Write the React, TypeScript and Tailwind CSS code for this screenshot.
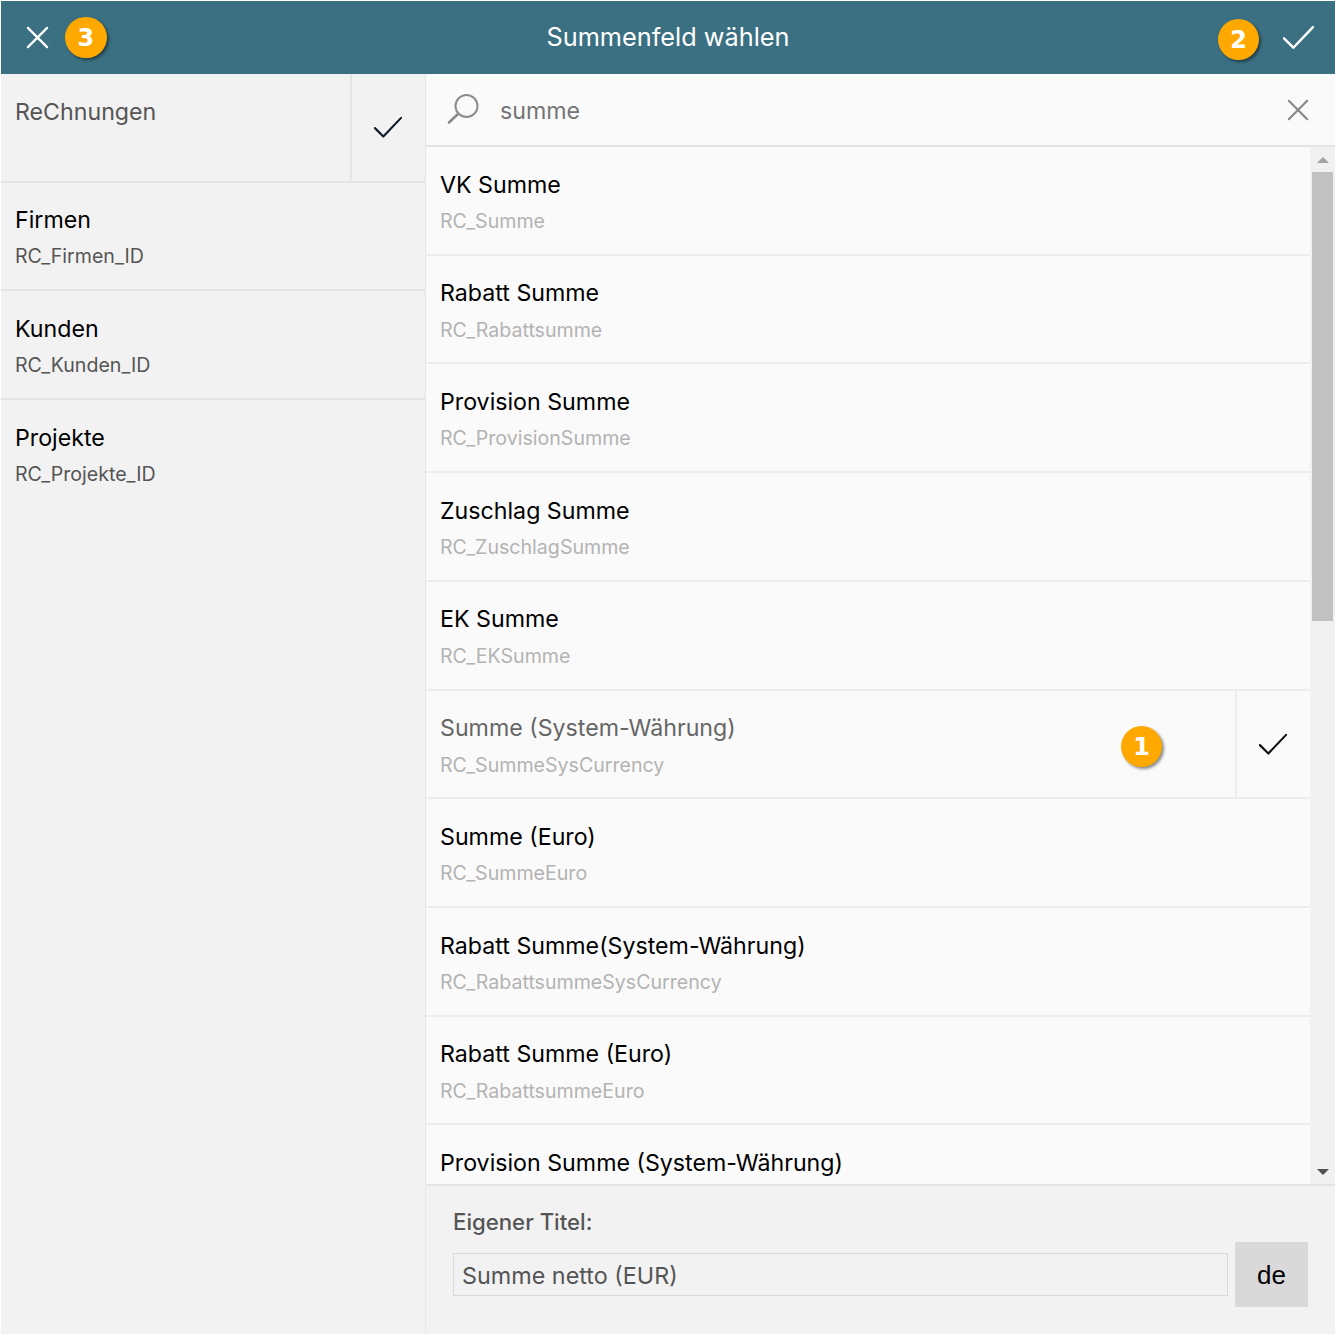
const items: [string, string][] = [
  ["VK Summe", "RC_Summe"],
  ["Rabatt Summe", "RC_Rabattsumme"],
  ["Provision Summe", "RC_ProvisionSumme"],
  ["Zuschlag Summe", "RC_ZuschlagSumme"],
  ["EK Summe", "RC_EKSumme"],
  ["Summe (System-Währung)", "RC_SummeSysCurrency"],
  ["Summe (Euro)", "RC_SummeEuro"],
  ["Rabatt Summe(System-Währung)", "RC_RabattsummeSysCurrency"],
  ["Rabatt Summe (Euro)", "RC_RabattsummeEuro"],
  ["Provision Summe (System-Währung)", ""],
];

const left: [string, string][] = [
  ["Firmen", "RC_Firmen_ID"],
  ["Kunden", "RC_Kunden_ID"],
  ["Projekte", "RC_Projekte_ID"],
];

function Badge({ n, className }: { n: string; className: string }) {
  return (
    <div
      className={
        "absolute w-[41.6px] h-[41.6px] pt-[1px] rounded-full bg-[#ffa900] text-white flex items-center justify-center text-[24px] font-bold font-['DejaVu_Sans',sans-serif] shadow-[2px_2px_3px_rgba(0,0,0,0.45)] " +
        className
      }
    >
      {n}
    </div>
  );
}

function Check({ size, color, stroke = 2 }: { size: number; color: string; stroke?: number }) {
  return (
    <svg width={size} height={size * 0.8} viewBox="0 0 30 24" fill="none" stroke={color} strokeWidth={stroke} strokeLinecap="round" strokeLinejoin="round">
      <path d="M1 13 L10 22 L29 2" />
    </svg>
  );
}

function Cross({ size, color, stroke = 2.4 }: { size: number; color: string; stroke?: number }) {
  return (
    <svg width={size} height={size} viewBox="0 0 24 24" fill="none" stroke={color} strokeWidth={stroke} strokeLinecap="round">
      <path d="M2 2 L22 22 M22 2 L2 22" />
    </svg>
  );
}

export default function App() {
  return (
    <div className="h-[1334px] w-[1335px] bg-white pl-px pt-px flex flex-col overflow-hidden font-['Inter',sans-serif] text-[23.2px]">
      <header className="relative h-[73px] shrink-0 bg-[#3b7082] flex items-center justify-between pl-[25px] pr-[21px]">
        <Cross size={23} color="#ffffff" />
        <h1 className="text-white text-[25.3px] leading-none ml-[4px] -mt-[1px]">Summenfeld wählen</h1>
        <Check size={31} color="#ffffff" stroke={2.4} />
        <Badge n="3" className="left-[64px] top-[15.7px]" />
        <Badge n="2" className="left-[1216.7px] top-[17.7px]" />
      </header>
      <div className="flex flex-1 min-h-0">
        <aside className="w-[425px] shrink-0 bg-[#f2f2f2] border-r border-[#e6e6e6]">
          <div className="flex h-[108.7px] border-b-2 border-[#e4e4e4]">
            <div className="flex-1 pl-[14px] pt-[24px] text-[#555555] leading-[29px]">ReChnungen</div>
            <div className="w-[75px] border-l-2 border-[#e6e6e6] flex items-center justify-center pr-[2px]">
              <Check size={28} color="#0d1b2a" stroke={2.3} />
            </div>
          </div>
          {left.map(([a, b], i) => (
            <div key={a} className={(i < 2 ? "border-b-2 border-[#e4e4e4] " : "") + "h-[108.7px] pl-[14px] pt-[23.6px]"}>
              <div className="text-black leading-[29px]">{a}</div>
              <div className="text-[#555555] text-[19.6px] leading-[24px] mt-[9px]">{b}</div>
            </div>
          ))}
        </aside>
        <main className="flex-1 min-w-0 flex flex-col bg-[#fafafa]">
          <div className="h-[73px] shrink-0 border-b-2 border-[#e4e4e4] flex items-center pl-[21px] pr-[26px]">
            <svg width="33" height="33" viewBox="0 0 33 33" fill="none" stroke="#8c8c8c" strokeWidth="2" strokeLinecap="round">
              <circle cx="19.5" cy="13" r="11" />
              <path d="M11 21 L2 29.5" strokeWidth="2.6" />
            </svg>
            <span className="ml-[20px] pt-[4px] flex-1 text-[#757575]">summe</span>
            <Cross size={22} color="#8a8a8a" />
          </div>
          <div className="flex-1 min-h-0 flex">
            <div className="flex-1 min-w-0 overflow-hidden">
              {items.map(([a, b], i) => (
                <div key={a} className="relative h-[108.72px] border-b-2 border-[#ededed] flex">
                  <div className="flex-1 pl-[14px] pt-[23.5px]">
                    <div className={(i === 5 ? "text-[#666666]" : "text-black") + " leading-[29px]"}>{a}</div>
                    <div className="text-[#b3b3b3] text-[19.6px] leading-[24px] mt-[9.5px]">{b}</div>
                  </div>
                  {i === 5 && (
                    <div className="w-[75px] border-l-2 border-[#ededed] flex items-center justify-center pr-[2px]">
                      <Check size={28} color="#111111" stroke={2.3} />
                    </div>
                  )}
                  {i === 5 && <Badge n="1" className="left-[694.7px] top-[35.2px]" />}
                </div>
              ))}
            </div>
            <div className="w-[25px] shrink-0 bg-[#f1f1f1] flex flex-col items-center">
              <div className="h-[25px] shrink-0 flex items-center justify-center">
                <div className="w-0 h-0 border-x-[6px] border-x-transparent border-b-[6px] border-b-[#a3a3a3]" />
              </div>
              <div className="w-[21px] h-[449px] bg-[#c1c1c1]" />
              <div className="flex-1" />
              <div className="h-[25px] shrink-0 flex items-center justify-center">
                <div className="w-0 h-0 border-x-[6px] border-x-transparent border-t-[6px] border-t-[#505050]" />
              </div>
            </div>
          </div>
          <div className="h-[150px] shrink-0 bg-[#f2f2f2] border-t-2 border-[#e4e4e4] pl-[27px] pr-[27px] pt-[21px]">
            <div className="text-[#555555] text-[22.2px] font-medium leading-[29px]">Eigener Titel:</div>
            <div className="flex items-center gap-[7px] mt-[6px]">
              <div className="flex-1 h-[43px] border border-[#d9d9d9] pl-[8px] pt-[3px] flex items-center text-[#555555] text-[23.35px]">Summe netto (EUR)</div>
              <div className="w-[73px] h-[65px] pt-[1px] bg-[#d9d9d9] text-black flex items-center justify-center font-['Liberation_Sans',sans-serif] text-[26px]">de</div>
            </div>
          </div>
        </main>
      </div>
    </div>
  );
}
